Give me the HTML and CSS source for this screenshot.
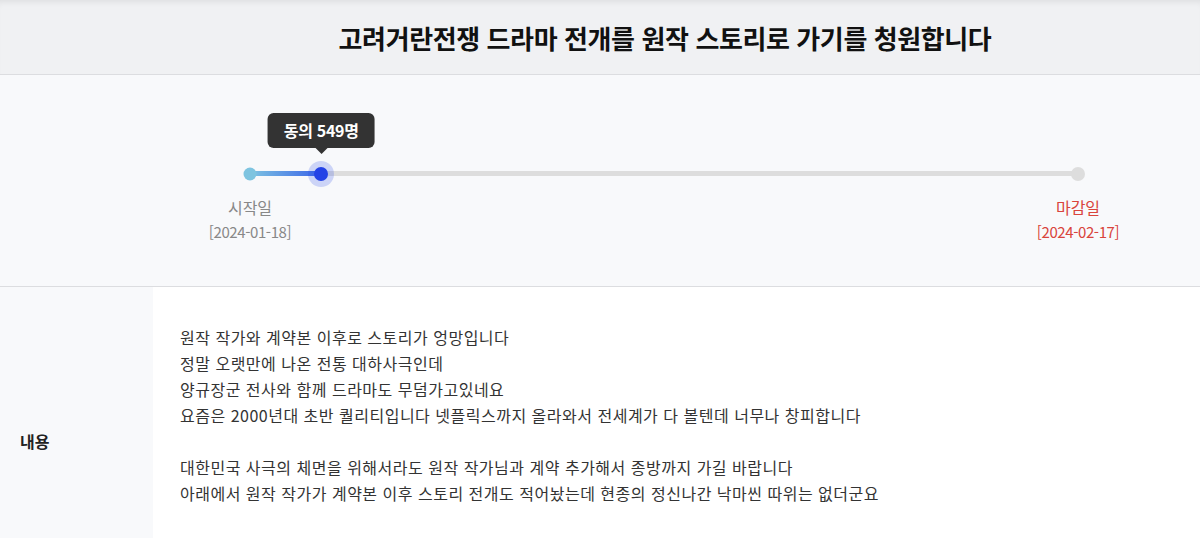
FILE: index.html
```html
<!DOCTYPE html>
<html lang="ko">
<head>
  <meta charset="UTF-8">
  <meta name="viewport" content="width=device-width, initial-scale=1.0">
  <title>청원 상세</title>
  <link rel="stylesheet" href="styles.css">
</head>
<body>
  <header class="petition-head">
    <h1>고려거란전쟁 드라마 전개를 원작 스토리로 가기를 청원합니다</h1>
  </header>

  <!-- 동의 진행 현황 -->
  <section class="progress">
    <div class="track">
      <div class="track-fill" style="width: 8.6%"></div>
      <span class="dot dot-start"></span>
      <span class="dot dot-now" style="left: 8.6%"></span>
      <span class="dot dot-end"></span>
      <div class="bubble" style="left: 8.6%">동의 549명</div>
    </div>
    <div class="ends">
      <div class="end start">
        <p class="end-label">시작일</p>
        <p class="end-date">[2024-01-18]</p>
      </div>
      <div class="end close">
        <p class="end-label">마감일</p>
        <p class="end-date">[2024-02-17]</p>
      </div>
    </div>
  </section>

  <section class="detail-row">
    <div class="detail-label">내용</div>
    <div class="detail-body">
      <p>원작 작가와 계약본 이후로 스토리가 엉망입니다</p>
      <p>정말 오랫만에 나온 전통 대하사극인데</p>
      <p>양규장군 전사와 함께 드라마도 무덤가고있네요</p>
      <p>요즘은 2000년대 초반 퀄리티입니다 넷플릭스까지 올라와서 전세계가 다 볼텐데 너무나 창피합니다</p>
      <p>&nbsp;</p>
      <p>대한민국 사극의 체면을 위해서라도 원작 작가님과 계약 추가해서 종방까지 가길 바랍니다</p>
      <p>아래에서 원작 작가가 계약본 이후 스토리 전개도 적어놨는데 현종의 정신나간 낙마씬 따위는 없더군요</p>
    </div>
  </section>
</body>
</html>
```

FILE: styles.css
```css
:root {
  --head-bg: #f0f1f3;
  --soft-bg: #f8f9fb;
  --line: #dcdde0;
  --text: #222222;
  --muted: #888888;
  --red: #d9443c;
  --blue: #2442e6;
}

* {
  box-sizing: border-box;
  margin: 0;
  padding: 0;
}

body {
  font-family: "Noto Sans CJK KR", "Noto Sans", sans-serif;
  color: var(--text);
  background: #ffffff;
}

.petition-head {
  height: 75px;
  background: var(--head-bg);
  border-bottom: 1px solid var(--line);
  box-shadow: inset 0 6px 6px -4px rgba(0, 0, 0, 0.08);
  display: flex;
  align-items: center;
  justify-content: center;
  padding-left: 130px;
}

.petition-head h1 {
  font-size: 26px;
  font-weight: 700;
  letter-spacing: -0.4px;
  color: #111111;
}

/* progress */
.progress {
  height: 212px;
  background: var(--soft-bg);
  border-bottom: 1px solid var(--line);
  padding-top: 96px;
}

.track {
  position: relative;
  height: 5px;
  margin: 0 122px 0 250px;
  background: #dddddd;
  border-radius: 3px;
}

.track-fill {
  height: 100%;
  border-radius: 3px;
  background: linear-gradient(90deg, #7ec4e2, #3a64e8);
}

.dot {
  position: absolute;
  top: 50%;
  border-radius: 50%;
  transform: translate(-50%, -50%);
}

.dot-start {
  left: 0;
  width: 13px;
  height: 13px;
  background: #7ec4e0;
}

.dot-end {
  left: 100%;
  width: 14px;
  height: 14px;
  background: #dddddd;
}

.dot-now {
  width: 14px;
  height: 14px;
  background: var(--blue);
  box-shadow: 0 0 0 6px rgba(48, 84, 230, 0.22);
}

.bubble {
  position: absolute;
  bottom: 28px;
  transform: translateX(-50%);
  height: 35px;
  padding: 0 16px;
  border-radius: 6px;
  background: #333333;
  color: #ffffff;
  font-size: 16px;
  font-weight: 700;
  line-height: 35px;
  white-space: nowrap;
  letter-spacing: -0.3px;
}

.bubble::after {
  content: "";
  position: absolute;
  left: 50%;
  bottom: -6px;
  margin-left: -6px;
  border-left: 6px solid transparent;
  border-right: 6px solid transparent;
  border-top: 6px solid #333333;
}

.ends {
  display: flex;
  justify-content: space-between;
  margin: 19px 62px 0 190px;
}

.end {
  width: 120px;
  text-align: center;
  color: var(--muted);
}

.end.close {
  color: var(--red);
}

.end-label {
  font-size: 16px;
  line-height: 24px;
}

.end-date {
  font-size: 15px;
  line-height: 26px;
  letter-spacing: -0.4px;
}

/* content */
.detail-row {
  display: grid;
  grid-template-columns: 153px 1fr;
}

.detail-label {
  background: var(--soft-bg);
  display: flex;
  align-items: center;
  padding-left: 20px;
  font-size: 16px;
  font-weight: 700;
}

.detail-body {
  padding: 37px 27px 89px;
  font-size: 16px;
  line-height: 26px;
  letter-spacing: 0.5px;
  color: #333333;
}
```
